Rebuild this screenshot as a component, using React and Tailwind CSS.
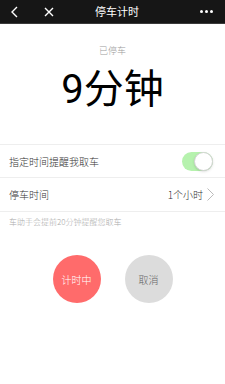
import React from 'react'

const FONT = { fontFamily: '"Noto Sans CJK SC", "Noto Sans", sans-serif' }

function Header() {
  return (
    <div className="h-6 bg-[#161616] flex items-center px-2 border-b border-[#3a3a3a]">
      <svg width="10" height="12" viewBox="0 0 10 12" className="ml-0.5">
        <path d="M7 1 L2 6 L7 11" stroke="#fff" strokeWidth="1.4" fill="none" />
      </svg>
      <svg width="10" height="10" viewBox="0 0 10 10" className="ml-[24px]">
        <path d="M1 1 L9 9 M9 1 L1 9" stroke="#fff" strokeWidth="1.4" fill="none" />
      </svg>
      <div className="flex-1 text-center text-white text-[11px] pr-[20px]">停车计时</div>
      <div className="flex gap-[2px] mr-1">
        <span className="w-[3px] h-[3px] rounded-full bg-white" />
        <span className="w-[3px] h-[3px] rounded-full bg-white" />
        <span className="w-[3px] h-[3px] rounded-full bg-white" />
      </div>
    </div>
  )
}

export default function App() {
  return (
    <div className="w-[225px] h-[384px] bg-white overflow-hidden" style={FONT}>
      <Header />
      <div className="pt-[21px] text-center text-[9px] leading-[12px] text-[#9a9a9a] font-light">已停车</div>
      <div className="text-center text-[40px] leading-[48px] mt-[9px] text-black" style={{ fontFamily: 'Roboto, "Noto Sans CJK SC", sans-serif' }}>9分钟</div>
      <div className="mt-[30px] border-t border-[#eeeeee]">
        <div className="h-[33px] flex items-center pl-[9px] pr-[12px] border-b border-[#eeeeee]">
          <span className="flex-1 text-[10px] text-[#333] font-light">指定时间提醒我取车</span>
          <div className="w-[31px] h-[19px] rounded-full bg-[#b6f2ae] flex items-center justify-end">
            <span className="w-[19px] h-[19px] rounded-full bg-white border border-[#d4d4d4] shadow-sm" />
          </div>
        </div>
        <div className="h-[34px] flex items-center pl-[9px] pr-[11px] border-b border-[#eeeeee]">
          <span className="flex-1 text-[10px] text-[#333] font-light">停车时间</span>
          <span className="text-[10px] text-[#333] font-light">1个小时</span>
          <svg width="7" height="13" viewBox="0 0 7 13" className="ml-[4px]">
            <path d="M0.5 0.5 L6.5 6.5 L0.5 12.5" stroke="#bbbbbb" strokeWidth="1" fill="none" />
          </svg>
        </div>
      </div>
      <div className="pl-[9px] pt-[4px] text-[8px] leading-[12px] text-[#aaaaaa] font-light">车助手会提前20分钟提醒您取车</div>
      <div className="flex justify-center gap-[24px] mt-[27px]">
        <div className="w-[48px] h-[48px] rounded-full bg-[#ff6b6b] flex items-center justify-center text-white text-[10px] font-light">计时中</div>
        <div className="w-[48px] h-[48px] rounded-full bg-[#dcdcdc] flex items-center justify-center text-[#666] text-[10px] font-light">取消</div>
      </div>
    </div>
  )
}
